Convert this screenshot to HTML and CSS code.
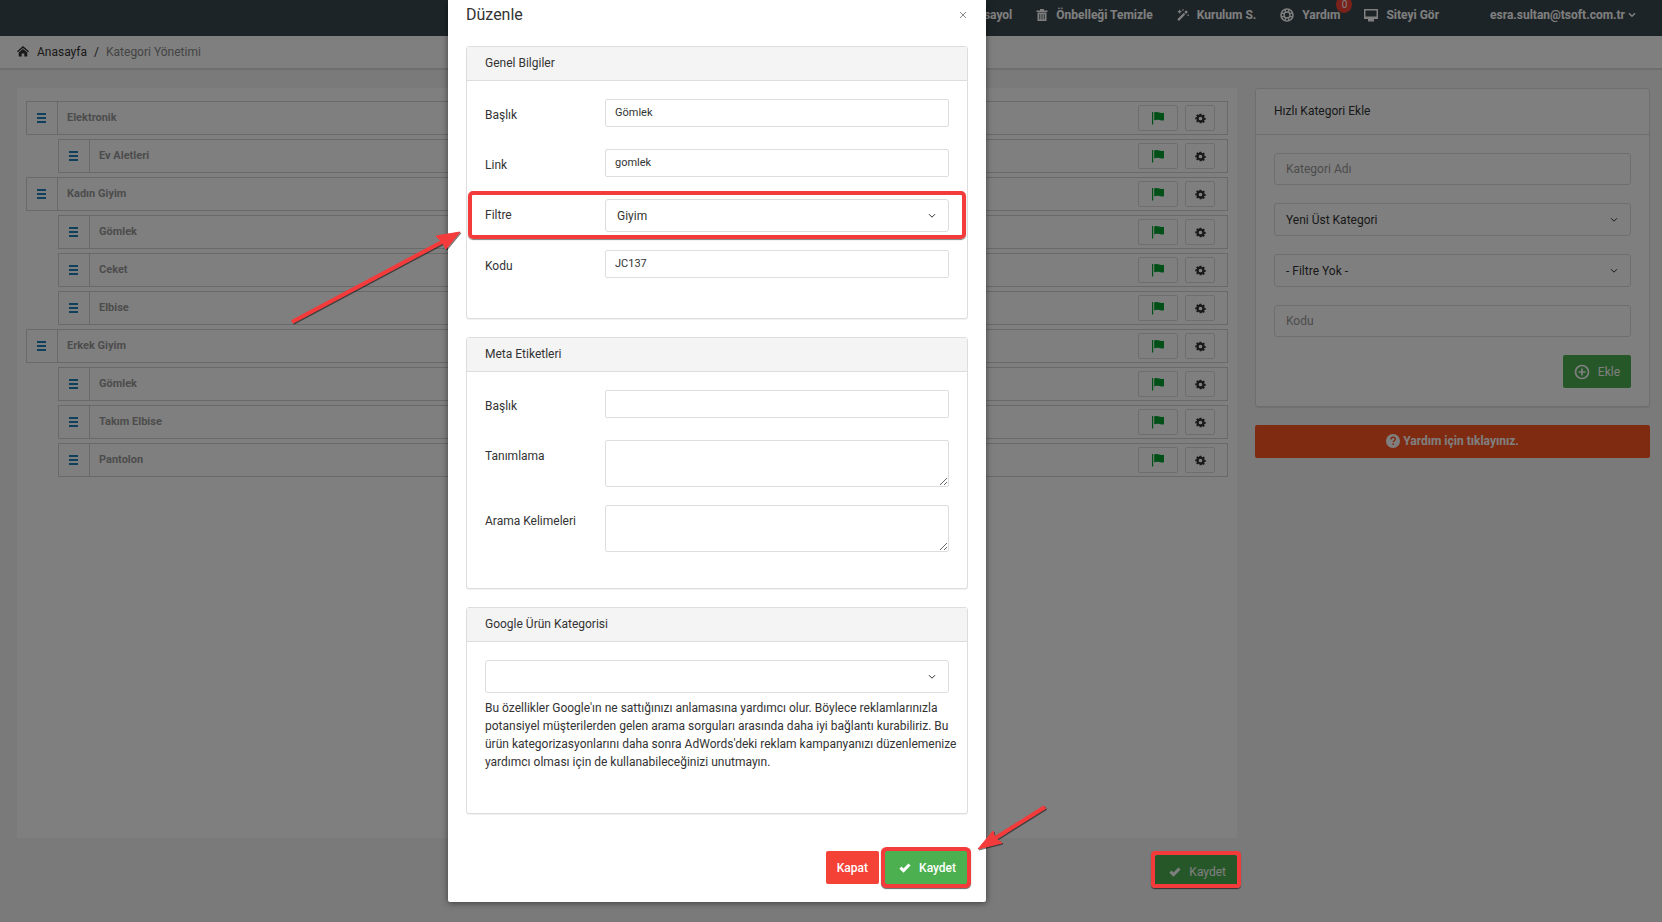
FILE: index.html
```html
<!DOCTYPE html>
<html lang="tr">
<head>
<meta charset="utf-8">
<title>Kategori Yönetimi</title>
<link rel="stylesheet" href="styles.css">
</head>
<body>
<svg class="defs" aria-hidden="true">
  <symbol id="i-flag" viewBox="0 0 14 14"><path d="M1 1h1.200v12.500H1zM3.200 1.400c2-.9 3.600-.4 5 .2 1.400.600 2.900.5 4.800.2v7.500c-1.700.4-3.200.4-4.600-.2-1.500-.6-3.200-.6-5.200.2z"/></symbol>
  <symbol id="i-gear" viewBox="0 0 16 16"><path fill-rule="evenodd" d="M6.700 1h2.600l.4 1.900 1.100.5 1.700-1.100 1.800 1.800-1.100 1.700.5 1.100 1.900.4v2.400l-1.900.4-.5 1.100 1.100 1.700-1.800 1.800-1.700-1.100-1.100.5L9.300 15H6.700l-.4-1.900-1.100-.5-1.700 1.100-1.800-1.800 1.100-1.700-.5-1.100L.4 9.300V6.700l1.900-.4.5-1.100-1.100-1.700 1.800-1.800 1.700 1.100 1.100-.5zM8 5.300a2.700 2.700 0 1 0 0 5.400 2.700 2.700 0 0 0 0-5.400z"/></symbol>
  <symbol id="i-check" viewBox="0 0 12 10"><path d="M.4 5.700 2.500 3.600 4.500 5.500 9.400.5 11.600 2.600 4.500 9.700z"/></symbol>
</svg>

<div class="app">
  <header class="topbar">
    <nav class="nav">
      <a href="#">Kısayol</a>
      <a href="#"><svg class="ic" viewBox="0 0 12 12"><path d="M4 0h4v1.500h3.500V3H.5V1.500H4zM1.500 3.500h9V12h-9zM3.400 5v5.500h.8V5zm2.200 0v5.500h.8V5zm2.200 0v5.500h.8V5z" fill-rule="evenodd"/></svg>Önbelleği Temizle</a>
      <a href="#"><svg class="ic" viewBox="0 0 12 12"><path d="M.3 10.200 6.600 3.900l1.700 1.700L2 11.900zM7.300 3.200 9.200 1.300l1.700 1.700L9 4.900zM2 .8h1.200V2h1.200v1.200H3.200v1.200H2V3.200H.8V2H2zM5.300.2h1.300v1.500H5.300zM10.500 5.500h1.300V7h-1.300z"/></svg>Kurulum S.</a>
      <a href="#"><svg class="ic ic-lg" viewBox="0 0 14 14"><g fill="none" stroke="currentColor"><circle cx="7" cy="7" r="6" stroke-width="1.600"/><circle cx="7" cy="7" r="3" stroke-width="1.400"/><path stroke-width="1.200" d="M5.300 1v3.300M8.700 1v3.300M5.300 9.700V13M8.700 9.700V13M1 5.300h3.300M1 8.700h3.300M9.700 5.300H13M9.700 8.700H13"/></g></svg>Yardım<span class="badge">0</span></a>
      <a href="#"><svg class="ic ic-lg" viewBox="0 0 14 14"><path fill-rule="evenodd" d="M0 1h14v10H0zM1.500 2.400v6.200h11V2.400zM4 11h6v2.500H4z"/></svg>Siteyi Gör</a>
    </nav>
    <a href="#" class="account">esra.sultan@tsoft.com.tr<svg class="chev" viewBox="0 0 8 6"><path d="M1 1.200 4 4.200 7 1.200"/></svg></a>
  </header>

  <nav class="crumbs" aria-label="Konum">
    <svg class="home" viewBox="0 0 12 12"><path d="M6 0 12 5.200l-.9 1L6 1.900.9 6.200 0 5.200zM6 3l4.300 3.600V10.500H7.300V7.500H4.700v3h-3V6.600z"/></svg>
    <a href="#">Anasayfa</a><span>/</span><span class="here">Kategori Yönetimi</span>
  </nav>

  <div class="columns">
    <main class="main">
      <ul class="tree" id="tree"></ul>
      <div class="actions"><button type="button" class="btn green"><svg class="check"><use href="#i-check"/></svg>Kaydet</button></div>
    </main>
    <aside class="side">
      <section class="quick">
        <h2>Hızlı Kategori Ekle</h2>
        <form class="quick-form">
          <input class="field" type="text" placeholder="Kategori Adı" aria-label="Kategori Adı">
          <select class="field" aria-label="Üst Kategori"><option>Yeni Üst Kategori</option></select>
          <select class="field" aria-label="Filtre"><option>- Filtre Yok -</option></select>
          <input class="field" type="text" placeholder="Kodu" aria-label="Kodu">
          <button type="button" class="btn green add"><svg class="plus" viewBox="0 0 16 16"><circle cx="8" cy="8" r="6.500"/><path d="M8 4.500v7M4.500 8h7"/></svg>Ekle</button>
        </form>
      </section>
      <a href="#" class="help"><svg class="q" viewBox="0 0 14 14"><circle cx="7" cy="7" r="7"/><path d="M4.900 5.400C5 4 6 3.300 7.100 3.300c1.300 0 2.200.8 2.200 1.900 0 1.500-2.100 1.600-2.100 3.100M7.200 9.500v1.600"/></svg>Yardım için tıklayınız.</a>
    </aside>
  </div>
</div>

<div class="backdrop"></div>

<div class="modal" role="dialog" aria-labelledby="modal-title">
  <div class="modal-head"><h1 id="modal-title">Düzenle</h1><button type="button" class="close" aria-label="Kapat"><svg viewBox="0 0 8 8"><path d="M1 1l6 6M7 1 1 7"/></svg></button></div>

  <section class="card">
    <h2>Genel Bilgiler</h2>
    <div class="card-body">
      <div class="row"><label for="g-title">Başlık</label><input id="g-title" type="text" value="Gömlek"></div>
      <div class="row"><label for="g-link">Link</label><input id="g-link" type="text" value="gomlek"></div>
      <div class="row row-select"><label for="g-filter">Filtre</label><select id="g-filter" class="field"><option>Giyim</option></select><span class="mark"></span></div>
      <div class="row"><label for="g-code">Kodu</label><input id="g-code" type="text" value="JC137"></div>
    </div>
  </section>

  <section class="card">
    <h2>Meta Etiketleri</h2>
    <div class="card-body meta">
      <div class="row"><label for="m-title">Başlık</label><input id="m-title" type="text"></div>
      <div class="row"><label for="m-desc">Tanımlama</label><textarea id="m-desc"></textarea></div>
      <div class="row"><label for="m-keys">Arama Kelimeleri</label><textarea id="m-keys"></textarea></div>
    </div>
  </section>

  <section class="card">
    <h2>Google Ürün Kategorisi</h2>
    <div class="card-body google">
      <select class="field" aria-label="Google Ürün Kategorisi"><option></option></select>
      <p>Bu özellikler Google'ın ne sattığınızı anlamasına yardımcı olur. Böylece reklamlarınızla potansiyel müşterilerden gelen arama sorguları arasında daha iyi bağlantı kurabiliriz. Bu ürün kategorizasyonlarını daha sonra AdWords'deki reklam kampanyanızı düzenlemenize yardımcı olması için de kullanabileceğinizi unutmayın.</p>
    </div>
  </section>

  <div class="modal-foot">
    <button type="button" class="btn red">Kapat</button>
    <button type="button" class="btn green marked"><svg class="check"><use href="#i-check"/></svg>Kaydet</button>
  </div>
</div>

<div class="save-mark"></div>
<svg class="arrow arrow-filter" viewBox="0 0 174 98"><path class="shaft" d="M4 92 154 12"/><path class="tip" d="M172 2 158 19 154 12 148 6z"/></svg>
<svg class="arrow arrow-save" viewBox="0 0 74 50"><path class="shaft" d="M69 4 18 36"/><path class="tip" d="M2 46 17 28 19 35 26 40z"/></svg>
<script src="tree.js"></script>
</body>
</html>
```

FILE: tree.js
```js
const items = [
  ["Elektronik", 0], ["Ev Aletleri", 1], ["Kadın Giyim", 0], ["Gömlek", 1], ["Ceket", 1],
  ["Elbise", 1], ["Erkek Giyim", 0], ["Gömlek", 1], ["Takım Elbise", 1], ["Pantolon", 1]
];
document.getElementById("tree").innerHTML = items.map(([name, level]) => `
  <li class="node${level ? " child" : ""}">
    <span class="handle"><i></i></span>
    <span class="name">${name}</span>
    <button type="button" class="tool flag" aria-label="Durum"><svg><use href="#i-flag"/></svg></button>
    <button type="button" class="tool gear" aria-label="Ayarlar"><svg><use href="#i-gear"/></svg></button>
  </li>`).join("");
```

FILE: styles.css
```css
* { box-sizing: border-box; }
body {
  margin: 0;
  min-height: 100vh;
  overflow: hidden;
  position: relative;
  background: #f5f5f5;
  color: #333;
  font: 12px/18px Roboto, sans-serif;
}
a { color: inherit; text-decoration: none; }
h1, h2, p, ul { margin: 0; padding: 0; font-weight: 400; }
button, input, select, textarea { font: inherit; color: inherit; margin: 0; }
svg { fill: currentColor; flex: none; }
.defs { position: absolute; width: 0; height: 0; }

/* Top bar */
.topbar {
  display: flex;
  justify-content: flex-end;
  height: 36px;
  padding: 6px 26px 0 0;
  background: #3a484e;
  color: #fff;
  font-weight: 700;
}
.nav { display: flex; gap: 24px; margin-right: 51px; }
.nav a, .account { display: flex; align-items: center; height: 18px; position: relative; }
.ic { width: 12px; height: 12px; margin-right: 8px; }
.ic-lg { width: 14px; height: 14px; }
.badge {
  position: absolute;
  right: -12px;
  top: -10px;
  width: 16px;
  height: 17px;
  border-radius: 50%;
  background: #f44336;
  font-size: 10px;
  font-weight: 400;
  line-height: 17px;
  text-align: center;
}
.chev { width: 8px; height: 6px; margin-left: 3px; fill: none; stroke: currentColor; stroke-width: 1.5; }

/* Breadcrumbs */
.crumbs {
  display: flex;
  align-items: center;
  gap: 7px;
  height: 34px;
  padding: 0 17px;
  border-bottom: 2px solid #dcdcdc;
  background: #fff;
}
.home { width: 12px; height: 12px; margin-right: 1px; }
.here { color: #888; }

/* Columns */
.columns {
  display: grid;
  grid-template-columns: minmax(0, 1fr) 395px;
  gap: 18px;
  padding: 18px 12px 0 17px;
}
.tree {
  display: flex;
  flex-direction: column;
  gap: 4px;
  min-height: 750px;
  padding: 13px 9px;
  background: #fff;
  list-style: none;
}
.node {
  display: flex;
  align-items: center;
  height: 34px;
  padding-right: 12px;
  border: 1px solid #d2d2d2;
  color: #999;
  font-size: 11px;
  font-weight: 700;
}
.child { margin-left: 32px; }
.handle {
  display: grid;
  place-items: center;
  width: 31px;
  height: 32px;
  padding-right: 2px;
  border-right: 1px solid #d2d2d2;
}
.handle i {
  width: 9px;
  height: 10px;
  background: repeating-linear-gradient(#2080b8 0 2px, transparent 2px 4px);
}
.name { flex: 1; padding-left: 9px; }
.tool {
  display: grid;
  place-items: center;
  height: 26px;
  padding: 0;
  border: 1px solid #ddd;
  border-radius: 2px;
  background: #fff;
}
.tool svg { width: 14px; height: 14px; }
.flag { width: 40px; margin-right: 7px; color: #00a12f; }
.gear { width: 30px; color: #333; }
.gear svg { width: 11px; height: 11px; }
.actions { display: flex; justify-content: flex-end; padding-top: 17px; }

/* Quick add */
.quick {
  border: 1px solid #ddd;
  border-radius: 3px;
  background: #fff;
  box-shadow: 0 1px 1px rgba(0, 0, 0, .08);
}
.quick h2 {
  padding: 13px 18px 14px;
  border-bottom: 1px solid #ddd;
  font-size: 12px;
  line-height: 18px;
}
.quick-form { display: flex; flex-direction: column; gap: 18px; padding: 18px; }
.field {
  width: 100%;
  height: 33px;
  padding: 0 11px;
  border: 1px solid #ddd;
  border-radius: 3px;
  background: #fff;
  outline: 0;
}
input.field { height: 32px; }
.field::placeholder { color: #999; }
select.field {
  appearance: none;
  background: #fff url("data:image/svg+xml,%3Csvg xmlns='http://www.w3.org/2000/svg' viewBox='0 0 8 6' fill='none' stroke='%23333'%3E%3Cpath d='M1 1.200 4 4.200 7 1.200'/%3E%3C/svg%3E") no-repeat right 12px center / 8px 6px;
}
.add { align-self: flex-end; }
.plus { width: 16px; height: 16px; margin-right: 8px; fill: none; stroke: currentColor; stroke-width: 1.7; }
.help {
  display: flex;
  align-items: center;
  justify-content: center;
  gap: 3px;
  height: 33px;
  margin-top: 18px;
  padding-bottom: 2px;
  border-radius: 2px;
  background: #ff5722;
  color: #fff;
  font-weight: 700;
}
.q { width: 14px; height: 14px; }
.q path { fill: none; stroke: #ff5722; stroke-width: 1.5; }

/* Buttons */
.btn {
  display: inline-flex;
  align-items: center;
  height: 33px;
  padding: 0 11px;
  border: 0;
  border-radius: 2px;
  color: #fff;
}
.red { background: #f44336; font-weight: 500; }
.green { background: #4caf50; }
.check { width: 12px; height: 10px; margin: 0 8px 0 3px; }

/* Modal */
.backdrop { position: absolute; inset: 0; background: rgba(0, 0, 0, .5); }
.modal {
  position: absolute;
  top: 0;
  left: 448px;
  width: 538px;
  padding: 0 18px 18px;
  border-radius: 0 0 2px 2px;
  background: #fff;
  box-shadow: 0 1px 6px rgba(0, 0, 0, .5);
}
.modal-head { display: flex; align-items: center; justify-content: space-between; height: 29px; margin-bottom: 17px; }
.modal h1 { font-size: 16px; line-height: 24px; }
.close { width: 9px; height: 18px; padding: 0; border: 0; background: none; color: #888; }
.close svg { display: block; width: 8px; height: 8px; stroke: currentColor; }
.card {
  margin-bottom: 18px;
  border: 1px solid #ddd;
  border-radius: 3px;
  background: #fff;
  box-shadow: 0 1px 1px rgba(0, 0, 0, .06);
}
.card h2 {
  padding: 7px 18px 8px;
  border-bottom: 1px solid #ddd;
  background: #f4f4f4;
  font-size: 12px;
  line-height: 18px;
}
.card-body { display: flex; flex-direction: column; gap: 22px; padding: 18px 18px 40px; }
.row { display: grid; grid-template-columns: 120px minmax(0, 1fr); align-items: start; position: relative; }
.row label { padding-top: 7px; }
.row input, .row textarea {
  display: block;
  width: 100%;
  height: 28px;
  padding: 0 9px 1px;
  border: 1px solid #ddd;
  border-radius: 2px;
  background: #fff;
  outline: 0;
  font-size: 11px;
}
.row textarea { height: 47px; }
.row-select { margin-bottom: -4px; }
.mark {
  position: absolute;
  inset: -8px -17px -7px;
  border: 4px solid #f43b3b;
  border-radius: 5px;
  box-shadow: 0 1px 1px rgba(0, 0, 0, .5);
}
.meta { gap: 18px; padding-bottom: 36px; }
.meta .row:first-child { margin-bottom: 4px; }
.google { display: block; padding-bottom: 42px; }
.google p { margin-right: -8px; padding-top: 6px; }
.modal-foot { display: flex; justify-content: flex-end; gap: 6px; padding: 19px 1px 0 0; }
.modal .marked {
  box-shadow: 0 0 0 4px #f43b3b, 0 1px 1px 4px rgba(0, 0, 0, .6);
  font-weight: 500;
}

/* Callouts */
.save-mark {
  position: absolute;
  top: 851px;
  right: 421px;
  width: 90px;
  height: 37px;
  border: 4px solid #f43b3b;
  border-radius: 4px;
  box-shadow: 0 1px 1px rgba(0, 0, 0, .6);
}
.arrow { position: absolute; filter: drop-shadow(1px 1px 0 rgba(0, 0, 0, .5)); }
.arrow-filter { left: 288px; top: 230px; width: 174px; height: 98px; }
.arrow-save { left: 976px; top: 803px; width: 74px; height: 50px; }
.shaft { stroke: #f43b3b; stroke-width: 4; }
.tip { fill: #f43b3b; stroke: #f43b3b; stroke-width: 1; }
```
